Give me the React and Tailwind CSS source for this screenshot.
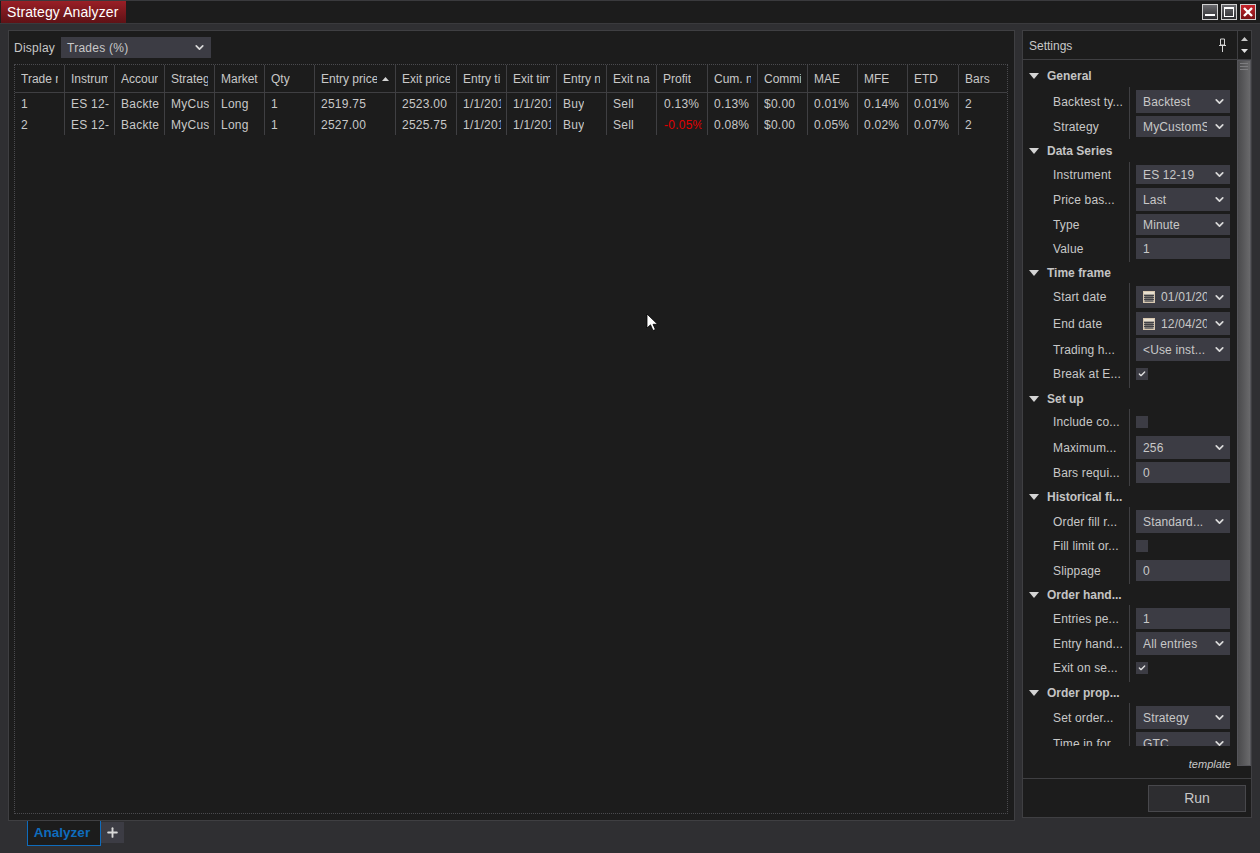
import React from 'react';
import { ChevronDown, Plus, Check } from 'lucide-react';

const columns = [
  ['Trade number', '1', '2'],
  ['Instrument', 'ES 12-19', 'ES 12-19'],
  ['Account', 'Backtest', 'Backtest'],
  ['Strategy', 'MyCustomStrategy', 'MyCustomStrategy'],
  ['Market pos.', 'Long', 'Long'],
  ['Qty', '1', '1'],
  ['Entry price', '2519.75', '2527.00'],
  ['Exit price', '2523.00', '2525.75'],
  ['Entry time', '1/1/2019', '1/1/2019'],
  ['Exit time', '1/1/2019', '1/1/2019'],
  ['Entry name', 'Buy', 'Buy'],
  ['Exit name', 'Sell', 'Sell'],
  ['Profit', '0.13%', '-0.05%'],
  ['Cum. net profit', '0.13%', '0.08%'],
  ['Commission', '$0.00', '$0.00'],
  ['MAE', '0.01%', '0.05%'],
  ['MFE', '0.14%', '0.02%'],
  ['ETD', '0.01%', '0.07%'],
  ['Bars', '2', '2'],
];

// h = row height, f = field height (the fields in the reference are not all the same)
const settings = [
  { title: 'General', rows: [
    { label: 'Backtest ty...', type: 'select', value: 'Backtest', h: 'h-[26px]', f: 'h-[23px]' },
    { label: 'Strategy', type: 'select', value: 'MyCustomStrategy', h: 'h-[26px]', f: 'h-[21px]' },
  ] },
  { title: 'Data Series', rows: [
    { label: 'Instrument', type: 'select', value: 'ES 12-19', h: 'h-[23px]', f: 'h-[19px]' },
    { label: 'Price bas...', type: 'select', value: 'Last', h: 'h-[26px]', f: 'h-[23px]' },
    { label: 'Type', type: 'select', value: 'Minute', h: 'h-[24px]', f: 'h-[21px]' },
    { label: 'Value', type: 'input', value: '1', h: 'h-[27px]', f: 'h-[21px]' },
  ] },
  { title: 'Time frame', short: true, rows: [
    { label: 'Start date', type: 'date', value: '01/01/2019', h: 'h-[26px]', f: 'h-[22px]' },
    { label: 'End date', type: 'date', value: '12/04/2019', h: 'h-[26px]', f: 'h-[23px]' },
    { label: 'Trading h...', type: 'select', value: '<Use inst...', h: 'h-[26px]', f: 'h-[23px]' },
    { label: 'Break at E...', type: 'check', checked: true, h: 'h-[27px]', f: 'h-[12px]' },
  ] },
  { title: 'Set up', short: true, rows: [
    { label: 'Include co...', type: 'check', h: 'h-[24px]', f: 'h-[12px]' },
    { label: 'Maximum...', type: 'select', value: '256', h: 'h-[26px]', f: 'h-[23px]' },
    { label: 'Bars requi...', type: 'input', value: '0', h: 'h-[27px]', f: 'h-[21px]' },
  ] },
  { title: 'Historical fi...', short: true, rows: [
    { label: 'Order fill r...', type: 'select', value: 'Standard...', h: 'h-[26px]', f: 'h-[23px]' },
    { label: 'Fill limit or...', type: 'check', h: 'h-[24px]', f: 'h-[12px]' },
    { label: 'Slippage', type: 'input', value: '0', h: 'h-[27px]', f: 'h-[21px]' },
  ] },
  { title: 'Order hand...', short: true, rows: [
    { label: 'Entries pe...', type: 'input', value: '1', h: 'h-[24px]', f: 'h-[21px]' },
    { label: 'Entry hand...', type: 'select', value: 'All entries', h: 'h-[26px]', f: 'h-[23px]' },
    { label: 'Exit on se...', type: 'check', checked: true, h: 'h-[27px]', f: 'h-[12px]' },
  ] },
  { title: 'Order prop...', short: true, rows: [
    { label: 'Set order...', type: 'select', value: 'Strategy', h: 'h-[26px]', f: 'h-[23px]' },
    { label: 'Time in for...', type: 'select', value: 'GTC', h: 'h-[26px]', f: 'h-[23px]' },
  ] },
];

const Triangle = ({ className = '' }) => (
  <svg width="10" height="6" viewBox="0 0 10 6" className={className}>
    <path d="M0 0h10L5 6z" fill="#d4d4d4" />
  </svg>
);

const Chevron = () => (
  <ChevronDown size={13} strokeWidth={3.2} className="shrink-0 text-[#d8d8d8]" />
);

const CalendarIcon = () => (
  <svg width="12" height="12" viewBox="0 0 12 12" className="shrink-0">
    <rect x="0.5" y="0.5" width="11" height="11" fill="#a8a29a" stroke="#d8c8b0" />
    <rect x="1" y="1" width="10" height="2" fill="#e8e0d0" />
    <path d="M1 4.5h10M1 6.5h10M1 8.5h10M3 4v7M5 4v7M7 4v7M9 4v7" stroke="#3a3a40" strokeWidth="0.9" />
  </svg>
);

const Field = ({ row }) => {
  if (row.type === 'check') {
    return (
      <span className="flex h-[12px] w-[12px] items-center justify-center bg-[#3c3c44]">
        {row.checked && <Check size={8} strokeWidth={4} className="text-[#e0e0e0]" />}
      </span>
    );
  }
  if (row.type === 'input') {
    return (
      <div className={`flex w-[94px] items-center bg-[#3c3c44] pl-[7px] ${row.f}`}>{row.value}</div>
    );
  }
  return (
    <div className={`flex w-[94px] items-center gap-[6px] bg-[#3c3c44] pl-[7px] pr-[4px] ${row.f}`}>
      {row.type === 'date' && <CalendarIcon />}
      <span className="min-w-0 flex-1 overflow-hidden whitespace-nowrap">{row.value}</span>
      <Chevron />
    </div>
  );
};

const Section = ({ section }) => (
  <div>
    <div className={`flex items-center pl-[6px] font-bold text-[#c4c4c4] ${section.short ? 'h-[21px]' : 'h-[23px]'}`}>
      <Triangle className="mr-[8px]" />
      {section.title}
    </div>
    {section.rows.map((row) => {
      const top = row.type === 'check' ? 'pt-[7px]' : 'pt-[3px]';
      return (
        <div key={row.label} className={`flex tracking-[0.15px] ${row.h}`}>
          <div className={`w-[107px] overflow-hidden whitespace-nowrap border-r border-[#3f3f42] pl-[30px] ${top}`}>
            <div className={`flex items-center ${row.f}`}>{row.label}</div>
          </div>
          <div className={`flex-1 pl-[6px] ${top}`}>
            <Field row={row} />
          </div>
        </div>
      );
    })}
  </div>
);

const WindowButton = ({ children, className }) => (
  <div className={`flex h-[16px] w-[16px] items-center justify-center border border-[#d0d0d0] ${className}`}>
    {children}
  </div>
);

export default function App() {
  return (
    <div
      className="relative flex h-[853px] w-[1260px] flex-col overflow-hidden bg-[#2f2f32] text-[12px] text-[#c8c8c8]"
      style={{ fontFamily: '"Liberation Sans", Arial, sans-serif' }}
    >
      {/* title bar */}
      <div className="flex h-[24px] shrink-0 items-center border-y border-[#3a3a3d] bg-[#1c1c1c]">
        <div className="ml-[1px] flex h-[22px] w-[125px] items-center bg-gradient-to-b from-[#9a1f26] to-[#5f1216] pl-[6px] text-[14px] tracking-[0.1px] text-white">
          Strategy Analyzer
        </div>
        <div className="ml-auto mr-[4px] flex items-center gap-[3px]">
          <WindowButton className="bg-gradient-to-b from-[#6a6a6e] to-[#2d2d30]">
            <div className="mt-[6px] h-[2px] w-[10px] bg-white" />
          </WindowButton>
          <WindowButton className="bg-gradient-to-b from-[#6a6a6e] to-[#2d2d30]">
            <div className="h-[10px] w-[10px] border border-t-2 border-white" />
          </WindowButton>
          <WindowButton className="bg-gradient-to-b from-[#c8242c] to-[#7a1216] text-white">
            <svg width="10" height="10" viewBox="0 0 10 10">
              <path d="M1 1l8 8M9 1l-8 8" stroke="#fff" strokeWidth="2.4" />
            </svg>
          </WindowButton>
        </div>
      </div>

      <div className="flex flex-1 items-start gap-[7px] pl-[8px] pt-[6px]">
        {/* left panel */}
        <div className="flex h-[791px] w-[1007px] shrink-0 flex-col border border-[#3f3f42] bg-[#1c1c1c] pl-[5px] pr-[6px]">
          <div className="flex h-[33px] shrink-0 items-center tracking-[0.25px]">
            <span className="w-[47px]">Display</span>
            <div className="flex h-[21px] w-[150px] items-center justify-between bg-[#3c3c44] pl-[6px] pr-[5px]">
              Trades (%)
              <Chevron />
            </div>
          </div>
          <div className="mb-[6px] flex-1 border border-dotted border-[#4a4a4e]">
            <div className="grid grid-cols-[50px_50px_50px_50px_50px_50px_81px_61px_50px_50px_50px_50px_51px_50px_50px_50px_50px_51px_48px]">
              {columns.map(([name], i) => (
                <div
                  key={name}
                  className={`flex h-[28px] items-center overflow-hidden border-b border-[#3f3f42] pl-[6px] pr-[6px] ${i < 18 ? 'border-r' : ''}`}
                >
                  <span className="overflow-hidden whitespace-nowrap">{name}</span>
                  {name === 'Entry price' && (
                    <svg width="7" height="4" viewBox="0 0 7 4" className="ml-[5px] shrink-0">
                      <path d="M0 4h7L3.5 0z" fill="#d4d4d4" />
                    </svg>
                  )}
                </div>
              ))}
              {[1, 2].map((r) =>
                columns.map((col, i) => (
                  <div
                    key={`${r}-${col[0]}`}
                    className={`flex h-[21px] items-center overflow-hidden border-[#3f3f42] pr-[5px] tracking-[0.25px] ${i < 18 ? 'border-r' : ''} ${i === 12 ? 'pl-[7px]' : 'pl-[6px]'}`}
                  >
                    <span className={`overflow-hidden whitespace-nowrap ${col[r] === '-0.05%' ? 'text-[#e00000]' : ''}`}>
                      {col[r]}
                    </span>
                  </div>
                ))
              )}
            </div>
          </div>
        </div>

        {/* settings panel */}
        <div className="flex h-[788px] w-[230px] shrink-0 flex-col border border-[#3f3f42] bg-[#1c1c1c]">
          <div className="flex h-[29px] shrink-0 items-center border-b border-[#3f3f42]">
            <span className="ml-[6px] flex-1 pt-[2px]">Settings</span>
            <svg width="7" height="14" viewBox="0 0 7 14" className="mr-[11px]">
              <path d="M1.5 1h4v6h-4zM0 7.5h7M3.5 8v6" fill="none" stroke="#d4d4d4" />
            </svg>
            <div className="flex h-full w-[14px] flex-col items-center justify-center gap-[8px] border-l border-[#3f3f42]">
              <svg width="7" height="4" viewBox="0 0 7 4"><path d="M0 4h7L3.5 0z" fill="#c8c8c8" /></svg>
              <svg width="7" height="4" viewBox="0 0 7 4"><path d="M0 0h7L3.5 4z" fill="#e0e0e0" /></svg>
            </div>
          </div>
          <div className="flex min-h-0 flex-1">
            <div className="flex w-[214px] shrink-0 flex-col">
              <div className="h-[686px] overflow-hidden pt-[4px]">
                {settings.map((section) => (
                  <Section key={section.title} section={section} />
                ))}
              </div>
              <div className="flex flex-1 items-end justify-end pb-[6px] pr-[6px] text-[11px] italic">template</div>
            </div>
            <div className="w-[14px] shrink-0 self-stretch">
              <div className="flex h-[706px] flex-col items-center gap-[2px] border border-[#55555a] bg-gradient-to-r from-[#4a4a4c] to-[#6a6a6c] pt-[2px]">
                <div className="h-[1px] w-[8px] bg-[#7d7d80]" />
                <div className="h-[1px] w-[8px] bg-[#7d7d80]" />
                <div className="h-[1px] w-[8px] bg-[#7d7d80]" />
              </div>
            </div>
          </div>
          <div className="flex h-[39px] shrink-0 items-center justify-end border-t border-[#3f3f42] pr-[5px]">
            <div className="flex h-[27px] w-[98px] items-center justify-center border border-[#48484c] bg-[#2d2d30] text-[14px]">
              Run
            </div>
          </div>
        </div>
      </div>

      {/* bottom tabs */}
      <div className="flex h-[32px] shrink-0 items-start pl-[27px]">
        <div className="flex h-[25px] w-[74px] items-center justify-center border border-t-0 border-[#0f6cbd] bg-[#1c1c1c] pr-[4px] text-[13.5px] font-bold text-[#0f6cbd]">
          Analyzer
        </div>
        <div className="mt-[1px] flex h-[21px] w-[23px] items-center justify-center bg-[#3c3c44]">
          <Plus size={15} strokeWidth={3} className="text-[#d8d8d8]" />
        </div>
      </div>

      {/* mouse pointer */}
      <svg width="12" height="19" viewBox="0 0 12 19" className="absolute left-[646px] top-[313px]">
        <path d="M1 1v14l3.5-3.2L7 17.5l2.4-1-2.4-5.2h4.6z" fill="#fff" stroke="#000" strokeWidth="0.8" />
      </svg>
    </div>
  );
}
